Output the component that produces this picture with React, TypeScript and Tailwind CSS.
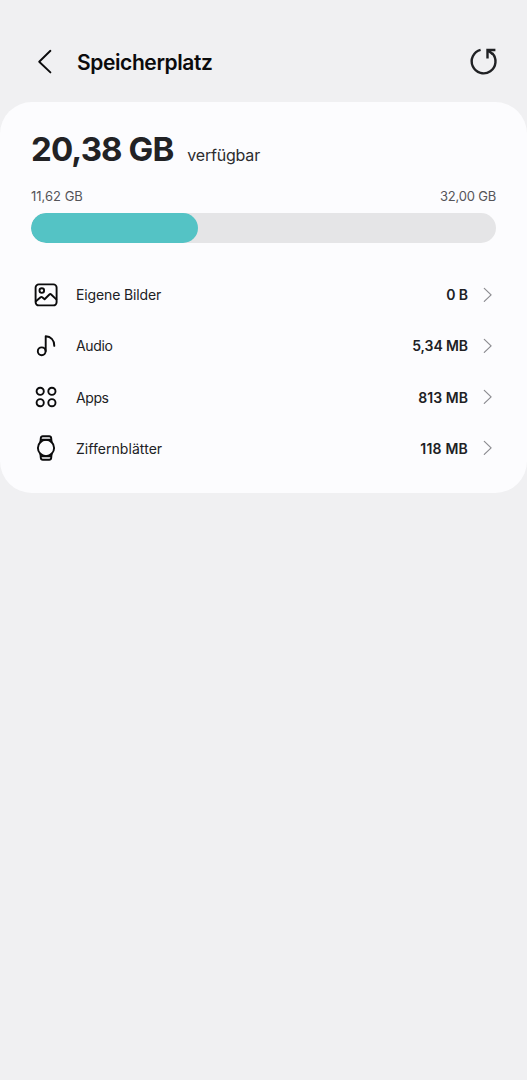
import type { ReactNode } from 'react';

type StorageItem = {
  label: string;
  size: string;
  icon: ReactNode;
  labelClass: string;
  sizeClass: string;
};

const iconProps = {
  width: 30,
  height: 30,
  viewBox: '0 0 30 30',
  fill: 'none',
  stroke: '#0b0b0c',
  strokeWidth: 1.9,
  strokeLinecap: 'round' as const,
  strokeLinejoin: 'round' as const,
};

const ImageIcon = () => (
  <svg {...iconProps}>
    <rect x="4.6" y="4.4" width="21" height="21" rx="3.2" />
    <circle cx="10.8" cy="10.6" r="2.3" />
    <path d="M4.9 21.3l4.7-4.1q.8-.6 1.6 0l2.4 2 4.8-4.7q.9-.8 1.8 0l5.1 4.9" />
  </svg>
);

const MusicIcon = () => (
  <svg {...iconProps}>
    <circle cx="10.7" cy="20.3" r="3.9" />
    <path d="M14.7 20.1V5.3c4.9.3 8.6 3.6 8.6 9.6" />
  </svg>
);

const AppsIcon = () => (
  <svg {...iconProps}>
    <circle cx="9.2" cy="9.3" r="3.6" />
    <circle cx="20.9" cy="9.3" r="3.6" />
    <circle cx="9.2" cy="20.7" r="3.6" />
    <circle cx="20.9" cy="20.7" r="3.6" />
  </svg>
);

const WatchIcon = () => (
  <svg {...iconProps}>
    <circle cx="15" cy="15" r="8.1" />
    <path d="M9.4 9.2l.4-4q.2-1.9 2-1.9h6.4q1.8 0 2 1.9l.4 4M9.4 20.8l.4 4q.2 1.9 2 1.9h6.4q1.8 0 2-1.9l.4-4M10.2 6.7h9.6M10.2 23.3h9.6" />
  </svg>
);

const items: StorageItem[] = [
  { label: 'Eigene Bilder', size: '0 B', icon: <ImageIcon />, labelClass: 'tracking-[-0.14px]', sizeClass: 'tracking-[-0.1px]' },
  { label: 'Audio', size: '5,34 MB', icon: <MusicIcon />, labelClass: 'tracking-[-0.36px]', sizeClass: 'tracking-[-0.1px]' },
  { label: 'Apps', size: '813 MB', icon: <AppsIcon />, labelClass: 'tracking-[-0.4px]', sizeClass: 'tracking-[0.05px]' },
  { label: 'Ziffernblätter', size: '118 MB', icon: <WatchIcon />, labelClass: 'tracking-[0.05px]', sizeClass: 'tracking-[0.2px]' },
];

const USED = 11.62;
const TOTAL = 32;

export default function App() {
  return (
    <div className="min-h-screen bg-[#f0f0f2] font-['Inter',sans-serif] text-[#202124]">
      <header className="flex h-[102.4px] items-center pt-[21px] pr-[28px] pl-[30px]">
        <button aria-label="Zurück" className="w-[30px]">
          <svg width="30" height="30" viewBox="0 0 30 30" fill="none" stroke="#0b0b0c" strokeWidth="1.9" strokeLinecap="round" strokeLinejoin="round">
            <path d="M20.4 3.8L9.2 14.7l11.2 10.7" />
          </svg>
        </button>
        <h1 className="ml-[17px] pt-[2px] text-[21px] leading-[30px] font-semibold tracking-[-0.4px] text-[#0b0b0c]">
          Speicherplatz
        </h1>
        <button aria-label="Aktualisieren" className="ml-auto">
          <svg width="30" height="30" viewBox="0 0 30 30" fill="none" stroke="#202124" strokeWidth="2.4">
            <path d="M11.6 2.9A11.9 11.9 0 1 0 23.1 6.1" />
            <path d="M26.4 3h-7.9v8.4M18.9 3.4l5 3.9" />
          </svg>
        </button>
      </header>

      <main className="h-[390.5px] rounded-[32px] bg-[#fcfcfe] px-[31px] pt-[26.5px]">
        <div className="flex h-[40px] items-baseline">
          <span className="text-[33px] leading-[40px] font-bold tracking-[-0.9px] text-[#222224]">20,38 GB</span>
          <span className="ml-[14px] text-[16px] tracking-[-0.2px] text-[#2c2c2f]">verfügbar</span>
        </div>

        <div className="mt-[18px] flex h-[20px] items-center justify-between text-[13px] text-[#555559]">
          <span>11,62 GB</span>
          <span className="tracking-[-0.2px]">32,00 GB</span>
        </div>
        <div className="mt-[6px] h-[30.5px] overflow-hidden rounded-full bg-[#e5e5e7]">
          <div
            className="h-full rounded-full bg-[#54c3c5]"
            style={{ width: `${(USED / TOTAL) * 99}%` }}
          />
        </div>

        <ul className="mt-[25.8px]">
          {items.map((item) => (
            <li key={item.label} className="flex h-[51.2px] items-center">
              {item.icon}
              <span className={`ml-[15px] text-[14px] ${item.labelClass}`}>{item.label}</span>
              <span className={`ml-auto text-[14px] font-semibold ${item.sizeClass}`}>{item.size}</span>
              <svg className="mr-px ml-[13px]" width="14" height="18" viewBox="0 0 14 18" fill="none" stroke="#8b8b90" strokeWidth="1.2" strokeLinecap="round" strokeLinejoin="round">
                <path d="M3.3 2.4l6.8 6.5-6.8 6.5" />
              </svg>
            </li>
          ))}
        </ul>
      </main>
    </div>
  );
}
